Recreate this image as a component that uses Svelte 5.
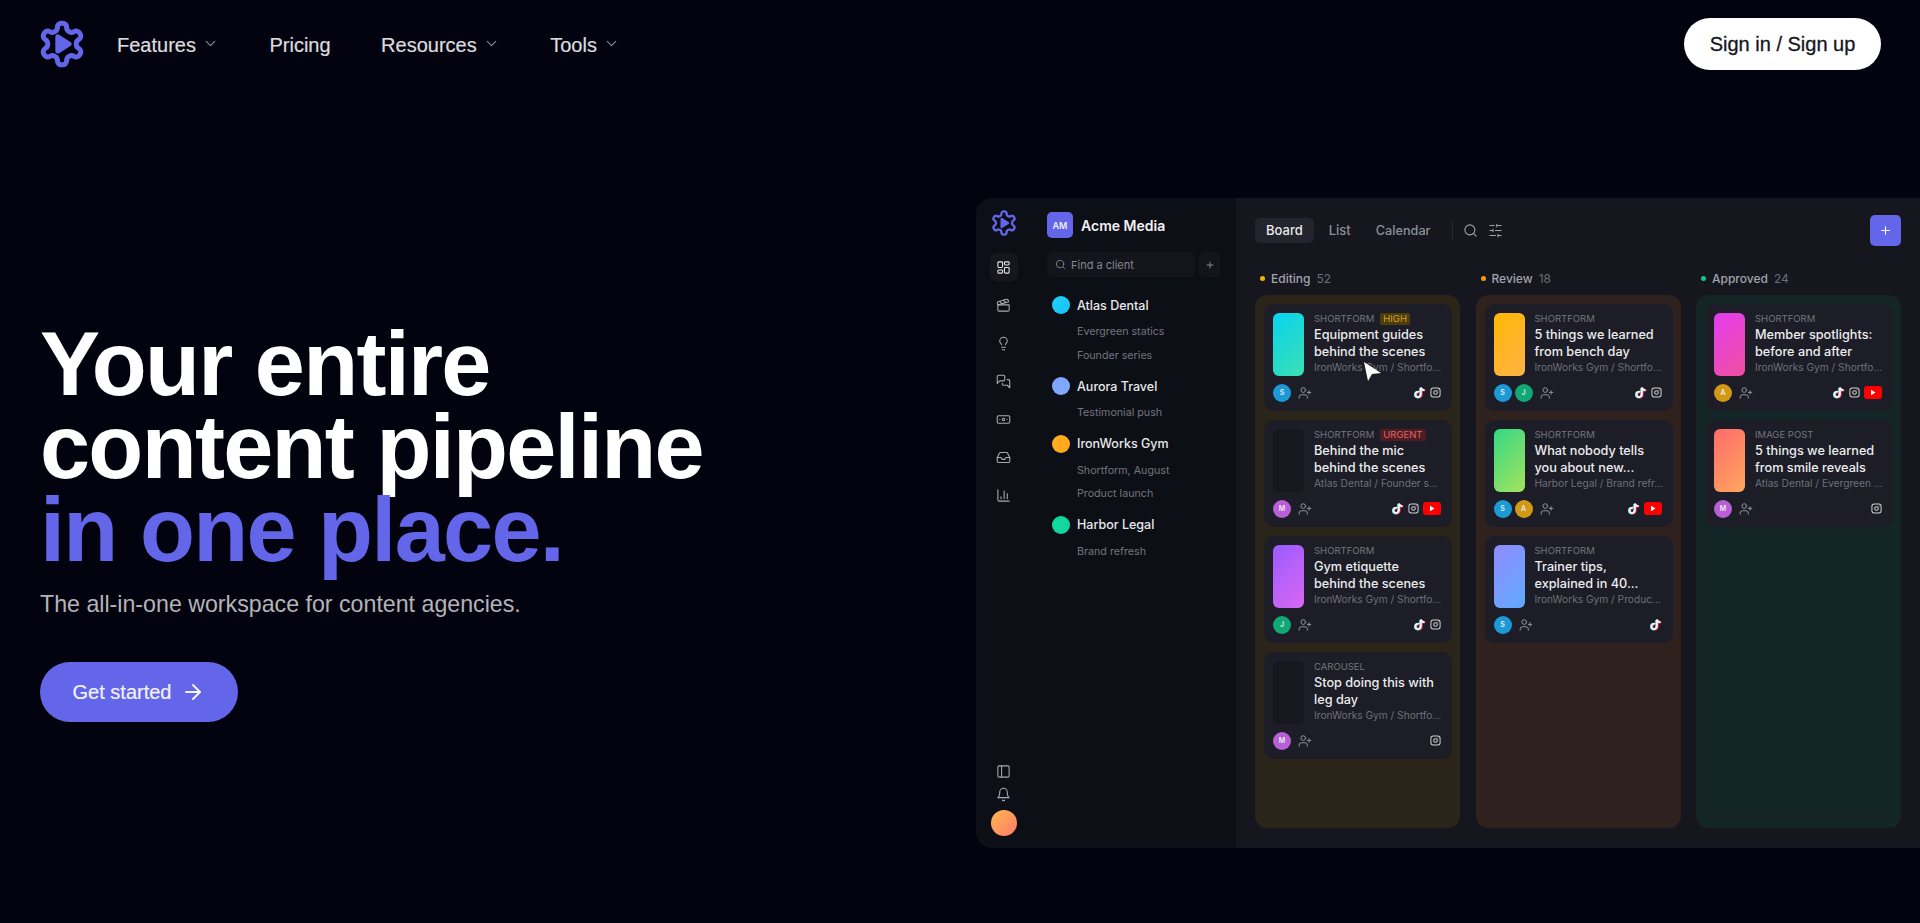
<script>
  const icons = {
    gear: '<path d="M12.22 2h-.44a2 2 0 0 0-2 2v.18a2 2 0 0 1-1 1.73l-.43.25a2 2 0 0 1-2 0l-.15-.08a2 2 0 0 0-2.73.73l-.22.38a2 2 0 0 0 .73 2.73l.15.1a2 2 0 0 1 1 1.72v.51a2 2 0 0 1-1 1.74l-.15.09a2 2 0 0 0-.73 2.73l.22.38a2 2 0 0 0 2.73.73l.15-.08a2 2 0 0 1 2 0l.43.25a2 2 0 0 1 1 1.73V20a2 2 0 0 0 2 2h.44a2 2 0 0 0 2-2v-.18a2 2 0 0 1 1-1.73l.43-.25a2 2 0 0 1 2 0l.15.08a2 2 0 0 0 2.73-.73l.22-.39a2 2 0 0 0-.73-2.73l-.15-.08a2 2 0 0 1-1-1.74v-.5a2 2 0 0 1 1-1.74l.15-.09a2 2 0 0 0 .73-2.73l-.22-.38a2 2 0 0 0-2.73-.73l-.15.08a2 2 0 0 1-2 0l-.43-.25a2 2 0 0 1-1-1.73V4a2 2 0 0 0-2-2z"/><path d="M10 8.6v6.8l5.4-3.4z" fill="currentColor"/>',
    dash: '<rect x="3" y="3" width="7.5" height="9" rx="1.5"/><rect x="13.5" y="3" width="7.5" height="5" rx="1.5"/><rect x="13.5" y="12" width="7.5" height="9" rx="1.5"/><rect x="3" y="16" width="7.5" height="5" rx="1.5"/>',
    clap: '<path d="M20.2 6 3 11l-.9-2.4c-.3-1.1.3-2.2 1.3-2.5l13.5-4c1.1-.3 2.2.3 2.5 1.3Z"/><path d="m6.2 5.3 3.1 3.9"/><path d="m12.4 3.4 3.1 4"/><path d="M3 11h18v8a2 2 0 0 1-2 2H5a2 2 0 0 1-2-2Z"/>',
    bulb: '<path d="M15 14c.2-1 .7-1.7 1.5-2.5 1-.9 1.5-2.2 1.5-3.5A6 6 0 0 0 6 8c0 1 .2 2.2 1.5 3.5.7.7 1.3 1.5 1.5 2.5"/><path d="M9 18h6"/><path d="M10 22h4"/>',
    chat: '<path d="M14 9a2 2 0 0 1-2 2H6l-4 4V4a2 2 0 0 1 2-2h8a2 2 0 0 1 2 2z"/><path d="M18 9h2a2 2 0 0 1 2 2v11l-4-4h-6a2 2 0 0 1-2-2v-1"/>',
    money: '<rect x="2" y="6" width="20" height="12" rx="2"/><circle cx="12" cy="12" r="2"/><path d="M6 12h.01M18 12h.01"/>',
    inbox: '<polyline points="22 12 16 12 14 15 10 15 8 12 2 12"/><path d="M5.45 5.11 2 12v6a2 2 0 0 0 2 2h16a2 2 0 0 0 2-2v-6l-3.45-6.89A2 2 0 0 0 16.76 4H7.24a2 2 0 0 0-1.79 1.11z"/>',
    chart: '<path d="M3 3v16a2 2 0 0 0 2 2h16"/><path d="M18 17V9"/><path d="M13 17V5"/><path d="M8 17v-3"/>',
    panel: '<rect width="18" height="18" x="3" y="3" rx="2"/><path d="M9 3v18"/>',
    bell: '<path d="M6 8a6 6 0 0 1 12 0c0 7 3 9 3 9H3s3-2 3-9"/><path d="M10.3 21a1.94 1.94 0 0 0 3.4 0"/>',
    search: '<circle cx="11" cy="11" r="8"/><path d="m21 21-4.3-4.3"/>',
    plus: '<path d="M5 12h14"/><path d="M12 5v14"/>',
    sliders: '<path d="M21 4h-7M10 4H3M21 12h-9M8 12H3M21 20h-5M12 20H3M14 2v4M8 10v4M16 18v4"/>',
    user: '<path d="M16 21v-2a4 4 0 0 0-4-4H6a4 4 0 0 0-4 4v2"/><circle cx="9" cy="7" r="4"/><path d="M19 8v6"/><path d="M22 11h-6"/>',
    insta: '<rect width="20" height="20" x="2" y="2" rx="5" ry="5"/><circle cx="12" cy="12" r="4"/><path d="M17.5 6.5h.01"/>',
    chev: '<path d="m6 9 6 6 6-6"/>',
    arrow: '<path d="M5 12h14"/><path d="m12 5 7 7-7 7"/>'
  };

  const nav = [
    { label: 'Features', menu: true },
    { label: 'Pricing', menu: false },
    { label: 'Resources', menu: true },
    { label: 'Tools', menu: true }
  ];
  const railIcons = ['dash', 'clap', 'bulb', 'chat', 'money', 'inbox', 'chart'];
  const clients = [
    { name: 'Atlas Dental', color: 'linear-gradient(135deg,#1fd0ff,#19c2f5)', subs: ['Evergreen statics', 'Founder series'] },
    { name: 'Aurora Travel', color: 'linear-gradient(135deg,#7aa6ff,#86a8fb)', subs: ['Testimonial push'] },
    { name: 'IronWorks Gym', color: 'linear-gradient(135deg,#ffb020,#ffa41f)', subs: ['Shortform, August', 'Product launch'] },
    { name: 'Harbor Legal', color: 'linear-gradient(135deg,#10dca0,#14d0a0)', subs: ['Brand refresh'] }
  ];
  const av = { S: '#1b9ad6', J: '#10a874', M: '#b95fd6', A: '#d29a14' };
  const columns = [
    { name: 'Editing', count: 52, dot: '#eab308', bg: '#2b2419', cards: [
      { thumb: 'linear-gradient(135deg,#08d3f2,#3be0b0)', cat: 'SHORTFORM', tag: 'HIGH', tagC: 'high', t: ['Equipment guides', 'behind the scenes'], sub: 'IronWorks Gym / Shortfo...', who: ['S'], tk: 1, ig: 1, yt: 0 },
      { thumb: '#17181f', cat: 'SHORTFORM', tag: 'URGENT', tagC: 'urgent', t: ['Behind the mic', 'behind the scenes'], sub: 'Atlas Dental / Founder s...', who: ['M'], tk: 1, ig: 1, yt: 1 },
      { thumb: 'linear-gradient(135deg,#9a5bff,#d968f2)', cat: 'SHORTFORM', t: ['Gym etiquette', 'behind the scenes'], sub: 'IronWorks Gym / Shortfo...', who: ['J'], tk: 1, ig: 1, yt: 0 },
      { thumb: '#17181f', cat: 'CAROUSEL', t: ['Stop doing this with', 'leg day'], sub: 'IronWorks Gym / Shortfo...', who: ['M'], tk: 0, ig: 1, yt: 0 }
    ] },
    { name: 'Review', count: 18, dot: '#f59e0b', bg: '#2e211e', cards: [
      { thumb: 'linear-gradient(135deg,#ffb703,#ffb347)', cat: 'SHORTFORM', t: ['5 things we learned', 'from bench day'], sub: 'IronWorks Gym / Shortfo...', who: ['S', 'J'], tk: 1, ig: 1, yt: 0 },
      { thumb: 'linear-gradient(135deg,#34d884,#a4e35e)', cat: 'SHORTFORM', t: ['What nobody tells', 'you about new...'], sub: 'Harbor Legal / Brand refr...', who: ['S', 'A'], tk: 1, ig: 0, yt: 1 },
      { thumb: 'linear-gradient(135deg,#8f8cff,#60a8ff)', cat: 'SHORTFORM', t: ['Trainer tips,', 'explained in 40...'], sub: 'IronWorks Gym / Produc...', who: ['S'], tk: 1, ig: 0, yt: 0 }
    ] },
    { name: 'Approved', count: 24, dot: '#10c98f', bg: '#142528', cards: [
      { thumb: 'linear-gradient(135deg,#e23cf0,#f0509e)', cat: 'SHORTFORM', t: ['Member spotlights:', 'before and after'], sub: 'IronWorks Gym / Shortfo...', who: ['A'], tk: 1, ig: 1, yt: 1 },
      { thumb: 'linear-gradient(135deg,#ff6b6b,#ffa75e)', cat: 'IMAGE POST', t: ['5 things we learned', 'from smile reveals'], sub: 'Atlas Dental / Evergreen ...', who: ['M'], tk: 0, ig: 1, yt: 0 }
    ] }
  ];
</script>

{#snippet icon(name, size, sw = 2)}
  <svg class="ic" width={size} height={size} viewBox="0 0 24 24" fill="none" stroke="currentColor" stroke-width={sw} stroke-linecap="round" stroke-linejoin="round">{@html icons[name]}</svg>
{/snippet}

{#snippet tiktok()}
  <svg class="ic" width="12" height="14" viewBox="0 0 16 18" fill="none" stroke-width="2.6" stroke-linecap="round">
    <path d="M6.2 7.2a3.6 3.6 0 1 0 3 3.6V1.6c.4 2 1.8 3.2 3.8 3.4" stroke="#25f4ee" transform="translate(-1 .6)"/>
    <path d="M6.2 7.2a3.6 3.6 0 1 0 3 3.6V1.6c.4 2 1.8 3.2 3.8 3.4" stroke="#fe2c55" transform="translate(1 .6)"/>
    <path d="M6.2 7.2a3.6 3.6 0 1 0 3 3.6V1.6c.4 2 1.8 3.2 3.8 3.4" stroke="#f2f2f2"/>
  </svg>
{/snippet}

<div class="page">
  <header class="top">
    <svg class="logo" width="50" height="50" viewBox="0 0 24 24" fill="none" stroke="currentColor" stroke-width="2.4" stroke-linecap="round" stroke-linejoin="round">{@html icons.gear}</svg>
    <nav class="nav">
      {#each nav as item}
        <a class="nav-item" href="#top">{item.label}{#if item.menu}<span class="chev">{@render icon('chev', 17, 1.6)}</span>{/if}</a>
      {/each}
    </nav>
    <button class="signin">Sign in / Sign up</button>
  </header>

  <main class="hero">
    <section class="copy">
      <h1>Your entire<br />content pipeline<br /><span>in one place.</span></h1>
      <p>The all-in-one workspace for content agencies.</p>
      <button class="cta">Get started {@render icon('arrow', 24, 2)}</button>
    </section>

    <section class="app">
      <aside class="rail">
        <svg class="rail-logo" width="28" height="28" viewBox="0 0 24 24" fill="none" stroke="currentColor" stroke-width="2" stroke-linecap="round" stroke-linejoin="round">{@html icons.gear}</svg>
        <div class="rail-list">
          {#each railIcons as r, i}
            <span class="rail-btn" class:on={i === 0}>{@render icon(r, 15, 1.7)}</span>
          {/each}
        </div>
        <div class="rail-foot">
          {@render icon('panel', 15, 1.7)}
          {@render icon('bell', 15, 1.7)}
          <span class="me"></span>
        </div>
      </aside>

      <aside class="clients">
        <div class="org"><span class="org-badge">AM</span><strong>Acme Media</strong></div>
        <div class="find">
          <div class="find-box">{@render icon('search', 11, 2)}<span>Find a client</span></div>
          <span class="find-add">{@render icon('plus', 10, 2)}</span>
        </div>
        <ul class="client-list">
          {#each clients as c}
            <li>
              <div class="client"><span class="cdot" style="background:{c.color}"></span>{c.name}</div>
              {#each c.subs as s}<div class="csub">{s}</div>{/each}
            </li>
          {/each}
        </ul>
      </aside>

      <div class="board">
        <div class="toolbar">
          <span class="tab on">Board</span>
          <span class="tab">List</span>
          <span class="tab">Calendar</span>
          <span class="sep"></span>
          <span class="tool">{@render icon('search', 15, 1.8)}</span>
          <span class="tool">{@render icon('sliders', 15, 1.8)}</span>
          <span class="add">{@render icon('plus', 13, 2)}</span>
        </div>
        <div class="cols">
          {#each columns as col}
            <div class="col">
              <div class="col-head"><i style="background:{col.dot}"></i><b>{col.name}</b><em>{col.count}</em></div>
              <div class="col-body" style="background:{col.bg}">
                {#each col.cards as card}
                  <article class="card">
                    <div class="card-main">
                      <div class="thumb" style="background:{card.thumb}"></div>
                      <div class="card-text">
                        <div class="cat">{card.cat}{#if card.tag}<span class="tag {card.tagC}">{card.tag}</span>{/if}</div>
                        <div class="title">{card.t[0]}<br />{card.t[1]}</div>
                        <div class="sub">{card.sub}</div>
                      </div>
                    </div>
                    <div class="card-foot">
                      {#each card.who as w}<span class="av" style="background:{av[w]}">{w}</span>{/each}
                      <span class="assign">{@render icon('user', 14, 1.7)}</span>
                      <span class="socials">
                        {#if card.tk}{@render tiktok()}{/if}
                        {#if card.ig}{@render icon('insta', 11, 2.2)}{/if}
                        {#if card.yt}<svg class="ic" width="18" height="13" viewBox="0 0 18 13"><rect width="18" height="13" rx="3" fill="#f00"/><path d="M7 3.8v5.4l4.5-2.7z" fill="#fff"/></svg>{/if}
                      </span>
                    </div>
                  </article>
                {/each}
              </div>
            </div>
          {/each}
        </div>
        <svg class="cursor" width="20" height="22" viewBox="0 0 20 22"><path d="M1 1 5 20l4-7 9-1z" fill="#fff"/></svg>
      </div>
    </section>
  </main>
</div>

<style>
  :global(body) { margin: 0; background: #03030f; }
  .page {
    height: 923px;
    background: #03030f;
    overflow: hidden;
    font-family: "Liberation Sans", Arial, sans-serif;
    color: #fff;
  }
  .ic { display: block; flex: none; }
  .top {
    height: 88px;
    box-sizing: border-box;
    display: flex;
    align-items: center;
    padding: 0 39px 0 37px;
  }
  .logo { color: #6366e8; flex: none; }
  .nav { display: flex; margin: 2px 0 0 30px; gap: 50.5px; }
  .nav-item {
    display: flex;
    align-items: center;
    gap: 6px;
    color: #dcdcdf;
    text-decoration: none;
    font-size: 20px;
    -webkit-text-stroke: 0.2px #dcdcdf;
  }
  .chev { color: #8b8b92; margin-top: -3px; }
  .signin {
    margin-left: auto;
    width: 197px;
    height: 52px;
    border: 0;
    border-radius: 26px;
    background: #fff;
    color: #16161d;
    font: 400 20px "Liberation Sans", sans-serif;
    -webkit-text-stroke: 0.3px #16161d;
  }
  .hero { display: flex; justify-content: space-between; align-items: flex-start; }
  .copy { padding: 235px 0 0 40px; }
  h1 {
    margin: 0;
    font-size: 90px;
    line-height: 83px;
    font-weight: 700;
    letter-spacing: -1.7px;
    color: #fff;
  }
  h1 span { color: #6366e8; }
  .copy p {
    margin: 17px 0 0;
    font-size: 23.2px;
    line-height: 30px;
    color: #b4b4b8;
  }
  .cta {
    margin-top: 43px;
    width: 198px;
    height: 60px;
    display: flex;
    align-items: center;
    justify-content: center;
    gap: 10px;
    border: 0;
    border-radius: 30px;
    background: #6366e8;
    color: #f2f2ff;
    font: 400 20px "Liberation Sans", sans-serif;
    -webkit-text-stroke: 0.2px #f2f2ff;
  }
  .app {
    margin-top: 110px;
    width: 944px;
    height: 650px;
    display: flex;
    flex: none;
    border-radius: 16px 0 0 16px;
    overflow: hidden;
    background: #0d0f17;
    font-family: Inter, sans-serif;
  }
  .rail {
    width: 55px;
    flex: none;
    box-sizing: border-box;
    padding: 11px 0 12px;
    display: flex;
    flex-direction: column;
    align-items: center;
  }
  .rail-logo { color: #6366e8; }
  .rail-list { margin-top: 16px; display: flex; flex-direction: column; gap: 10px; }
  .rail-btn {
    width: 28px; height: 28px;
    display: flex; align-items: center; justify-content: center;
    color: #a9abb3; border-radius: 6px;
  }
  .rail-btn.on { background: #15161f; color: #e6e7ea; }
  .rail-foot { margin-top: auto; display: flex; flex-direction: column; align-items: center; gap: 8px; color: #a9abb3; }
  .me { width: 26px; height: 26px; border-radius: 50%; background: linear-gradient(135deg,#ffb84d,#ff7a6b); }
  .clients { width: 205px; flex: none; box-sizing: border-box; padding: 15px 16px 0 16px; }
  .org { display: flex; align-items: center; gap: 8px; margin-top: -1px; }
  .org strong { font-size: 14px; font-weight: 600; color: #f2f2f4; }
  .org-badge {
    width: 26px; height: 26px; border-radius: 5px; background: #6366e8;
    display: flex; align-items: center; justify-content: center;
    font-size: 9px; font-weight: 600; color: #eef;
  }
  .find { display: flex; gap: 4px; margin-top: 14px; }
  .find-box {
    flex: 1; height: 25px; border-radius: 5px; background: #13141c;
    display: flex; align-items: center; gap: 5px; padding-left: 8px;
    font-size: 11px; color: #85868e;
  }
  .find-add {
    width: 21px; height: 25px; border-radius: 5px; background: #13141c;
    display: flex; align-items: center; justify-content: center; color: #9a9ba2;
  }
  .client-list { list-style: none; margin: 19px 0 0; padding: 0 0 0 5px; }
  .client-list li { margin-bottom: 13.5px; }
  .client {
    display: flex; align-items: center; gap: 7px;
    height: 18px; margin-bottom: 9px;
    font-size: 12.5px; font-weight: 500; color: #e8e8ea;
  }
  .cdot { width: 18px; height: 18px; border-radius: 50%; flex: none; }
  .csub { margin: 6.5px 0 0 25px; height: 17px; line-height: 17px; font-size: 10.7px; color: #73747c; }
  .board {
    flex: 1;
    background: #15161e;
    box-sizing: border-box;
    padding: 17px 20px 20px 19px;
    display: flex;
    flex-direction: column;
    position: relative;
  }
  .toolbar { display: flex; align-items: center; height: 31px; font-size: 13px; font-weight: 500; }
  .tab { height: 25px; line-height: 25px; padding: 0 11px; color: #8f9097; border-radius: 5px; margin-right: 4px; }
  .tab:nth-child(3) { font-size: 12.7px; margin-left: -1px; }
  .tab.on { background: #23242d; color: #e8e8ea; }
  .sep { width: 1px; height: 17px; background: #2a2b33; margin: 0 5px 0 6px; }
  .tool { margin: 0 5px; color: #a0a1a8; }
  .add {
    margin-left: auto; width: 31px; height: 31px; border-radius: 5px; background: #6366e8;
    display: flex; align-items: center; justify-content: center; color: #fff;
  }
  .cols { flex: 1; min-height: 0; margin-top: 20px; display: flex; gap: 15.5px; }
  .col { width: 205px; flex: none; display: flex; flex-direction: column; }
  .col-head {
    height: 24px; flex: none; padding: 0 0 0 5px;
    display: flex; align-items: center; gap: 6px; font-size: 12px;
  }
  .col-head i { width: 5px; height: 5px; border-radius: 50%; }
  .col-head b { font-weight: 500; color: #a3a4ab; }
  .col-head em { font-style: normal; color: #6d6e76; margin-left: 0; }
  .col-body {
    flex: 1; margin-top: 5px; border-radius: 12px; box-sizing: border-box;
    padding: 9px 8px 0 9px; display: flex; flex-direction: column; gap: 9px;
  }
  .card { height: 107px; box-sizing: border-box; border-radius: 10px; background: #1c1d26; padding: 8px 9px 0; flex: none; }
  .card-main { display: flex; gap: 10px; height: 63px; }
  .thumb { width: 31px; height: 63px; border-radius: 6px; flex: none; margin-top: 1px; }
  .card-text { min-width: 0; flex: 1; white-space: nowrap; }
  .cat { font-size: 9.5px; line-height: 14px; color: #74757d; display: flex; align-items: center; gap: 6px; }
  .tag { padding: 0 3px; border-radius: 2px; line-height: 12px; }
  .tag.high { background: #4d3c0e; color: #d6a416; }
  .tag.urgent { background: #4f1c22; color: #e2646a; }
  .title { margin-top: 1px; font-size: 12.7px; line-height: 16.5px; font-weight: 500; color: #ececee; }
  .sub { font-size: 10.2px; line-height: 14.5px; color: #6f7078; }
  .card-foot { display: flex; align-items: center; margin-top: 8px; height: 19px; gap: 3px; padding-right: 2px; }
  .av {
    width: 18px; height: 18px; border-radius: 50%;
    display: flex; align-items: center; justify-content: center;
    font-size: 7px; font-weight: 600; color: #e9e9ee;
  }
  .assign { margin-left: 4px; color: #92939a; }
  .socials { margin-left: auto; display: flex; align-items: center; gap: 4px; color: #d0d0d4; }
  .cursor { position: absolute; left: 127px; top: 163px; }
</style>
